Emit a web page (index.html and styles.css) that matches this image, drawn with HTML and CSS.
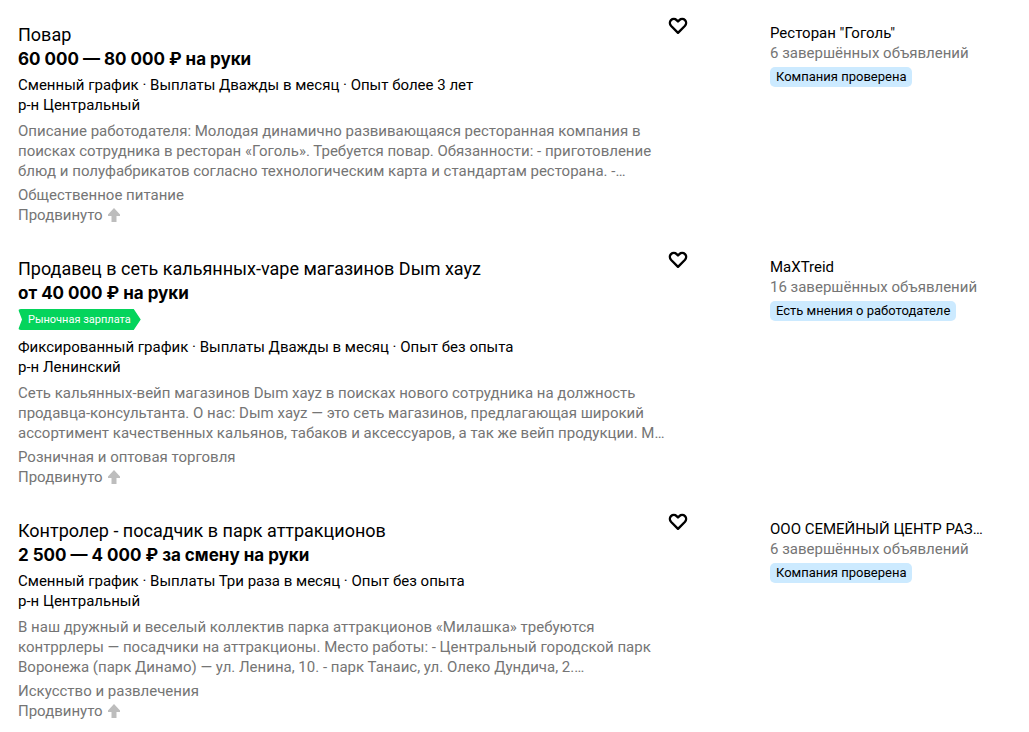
FILE: index.html
```
<!DOCTYPE html>
<html lang="ru">
<head>
    <meta charset="UTF-8">
    <meta name="viewport" content="width=device-width, initial-scale=1.0">
    <title>Вакансии</title>
    <link rel="stylesheet" href="styles.css">
</head>
<body>
    <main class="vacancies">
        <article class="vacancy">
            <div class="vacancy-body">
                <div class="vacancy-head">
                    <h3 class="title"><a href="#">Повар</a></h3>
                    <button class="favorite" type="button" aria-label="Добавить в избранное">
                        <svg width="20" height="18" viewBox="0 0 20 18"><path d="M10 15.8 3.2 9C1.5 7.2 1.5 4.6 3 3.1 4.6 1.6 7.1 1.6 8.6 3.1L10 4.5 11.4 3.1C12.9 1.6 15.4 1.6 17 3.1 18.5 4.6 18.5 7.2 16.8 9Z"/></svg>
                    </button>
                </div>
                <p class="salary">60 000 — 80 000 ₽ на руки</p>
                <div class="params">
                    <p>Сменный график · Выплаты Дважды в месяц · Опыт более 3 лет</p>
                    <p>р-н Центральный</p>
                </div>
                <p class="description">Описание работодателя: Молодая динамично развивающаяся ресторанная компания в<br>поисках сотрудника в ресторан «Гоголь». Требуется повар. Обязанности: - приготовление<br>блюд и полуфабрикатов согласно технологическим карта и стандартам ресторана. -…</p>
                <p class="category">Общественное питание</p>
                <p class="promoted">Продвинуто <svg width="12" height="14" viewBox="0 0 12 14"><path d="M6 0 12 6.5V8H8.5V14H3.5V8H0V6.5Z"/></svg></p>
            </div>
            <aside class="company">
                <a class="company-name" href="#">Ресторан "Гоголь"</a>
                <p class="company-ads">6 завершённых объявлений</p>
                <span class="badge">Компания проверена</span>
            </aside>
        </article>

        <article class="vacancy">
            <div class="vacancy-body">
                <div class="vacancy-head">
                    <h3 class="title"><a href="#">Продавец в сеть кальянных-vape магазинов Dыm xayz</a></h3>
                    <button class="favorite" type="button" aria-label="Добавить в избранное">
                        <svg width="20" height="18" viewBox="0 0 20 18"><path d="M10 15.8 3.2 9C1.5 7.2 1.5 4.6 3 3.1 4.6 1.6 7.1 1.6 8.6 3.1L10 4.5 11.4 3.1C12.9 1.6 15.4 1.6 17 3.1 18.5 4.6 18.5 7.2 16.8 9Z"/></svg>
                    </button>
                </div>
                <p class="salary">от 40 000 ₽ на руки</p>
                <span class="market">Рыночная зарплата</span>
                <div class="params">
                    <p>Фиксированный график · Выплаты Дважды в месяц · Опыт без опыта</p>
                    <p>р-н Ленинский</p>
                </div>
                <p class="description">Сеть кальянных-вейп магазинов Dыm xayz в поисках нового сотрудника на должность<br>продавца-консультанта. О нас: Dыm xayz — это сеть магазинов, предлагающая широкий<br>ассортимент качественных кальянов, табаков и аксессуаров, а так же вейп продукции. М…</p>
                <p class="category">Розничная и оптовая торговля</p>
                <p class="promoted">Продвинуто <svg width="12" height="14" viewBox="0 0 12 14"><path d="M6 0 12 6.5V8H8.5V14H3.5V8H0V6.5Z"/></svg></p>
            </div>
            <aside class="company">
                <a class="company-name" href="#">MaXTreid</a>
                <p class="company-ads">16 завершённых объявлений</p>
                <span class="badge">Есть мнения о работодателе</span>
            </aside>
        </article>

        <article class="vacancy">
            <div class="vacancy-body">
                <div class="vacancy-head">
                    <h3 class="title"><a href="#">Контролер - посадчик в парк аттракционов</a></h3>
                    <button class="favorite" type="button" aria-label="Добавить в избранное">
                        <svg width="20" height="18" viewBox="0 0 20 18"><path d="M10 15.8 3.2 9C1.5 7.2 1.5 4.6 3 3.1 4.6 1.6 7.1 1.6 8.6 3.1L10 4.5 11.4 3.1C12.9 1.6 15.4 1.6 17 3.1 18.5 4.6 18.5 7.2 16.8 9Z"/></svg>
                    </button>
                </div>
                <p class="salary">2 500 — 4 000 ₽ за смену на руки</p>
                <div class="params">
                    <p>Сменный график · Выплаты Три раза в месяц · Опыт без опыта</p>
                    <p>р-н Центральный</p>
                </div>
                <p class="description">В наш дружный и веселый коллектив парка аттракционов «Милашка» требуются<br>контррлеры — посадчики на аттракционы. Место работы: - Центральный городской парк<br>Воронежа (парк Динамо) — ул. Ленина, 10. - парк Танаис, ул. Олеко Дундича, 2.…</p>
                <p class="category">Искусство и развлечения</p>
                <p class="promoted">Продвинуто <svg width="12" height="14" viewBox="0 0 12 14"><path d="M6 0 12 6.5V8H8.5V14H3.5V8H0V6.5Z"/></svg></p>
            </div>
            <aside class="company">
                <a class="company-name" href="#">ООО СЕМЕЙНЫЙ ЦЕНТР РАЗ…</a>
                <p class="company-ads">6 завершённых объявлений</p>
                <span class="badge">Компания проверена</span>
            </aside>
        </article>
    </main>
</body>
</html>
```
FILE: styles.css
```
* {
    box-sizing: border-box;
}

body {
    margin: 0;
    background: #fff;
    color: #000;
    font-family: Roboto, "Liberation Sans", sans-serif;
    font-size: 15px;
    line-height: 20px;
}

h3,
p {
    margin: 0;
}

a {
    color: inherit;
    text-decoration: none;
}

a:hover {
    color: #f33;
}

.vacancies {
    display: flex;
    flex-direction: column;
    gap: 32px;
    padding: 23px 41px 8px 18px;
}

.vacancy {
    display: grid;
    grid-template-columns: minmax(0, 1fr) 218px;
    column-gap: 82px;
}

.vacancy-head {
    display: flex;
    justify-content: space-between;
    height: 24px;
}

.title {
    font-size: 18px;
    font-weight: 400;
    line-height: 24px;
}

.favorite {
    flex: none;
    width: 20px;
    height: 18px;
    margin-top: -6px;
    padding: 0;
    border: none;
    background: none;
    cursor: pointer;
}

.favorite svg {
    display: block;
    fill: none;
    stroke: #000;
    stroke-width: 2.4;
    stroke-linejoin: round;
}

.salary {
    font-family: Inter, Roboto, sans-serif;
    font-size: 17px;
    font-weight: 700;
    line-height: 24px;
}

.market {
    display: block;
    width: fit-content;
    margin: 4px 0 7px;
    padding: 0 10px;
    border-radius: 3px;
    background: #04d45c;
    clip-path: polygon(0 0, calc(100% - 7px) 0, 100% 50%, calc(100% - 7px) 100%, 0 100%, 4px 50%);
    color: #fff;
    font-size: 11px;
    line-height: 21px;
}

.params {
    margin-top: 4px;
}

.description {
    margin: 6px 0 4px;
    white-space: nowrap;
}

.description,
.category,
.promoted,
.company-ads {
    color: #757575;
}

.promoted svg {
    margin-left: 2px;
    fill: #bdbdbd;
    vertical-align: -2px;
}

.company-name {
    display: block;
    overflow: hidden;
    text-overflow: ellipsis;
    white-space: nowrap;
}

.badge {
    display: block;
    width: fit-content;
    margin-top: 4px;
    padding: 0 6px;
    border-radius: 5px;
    background: #cceaff;
    font-size: 13px;
    white-space: nowrap;
}
```
